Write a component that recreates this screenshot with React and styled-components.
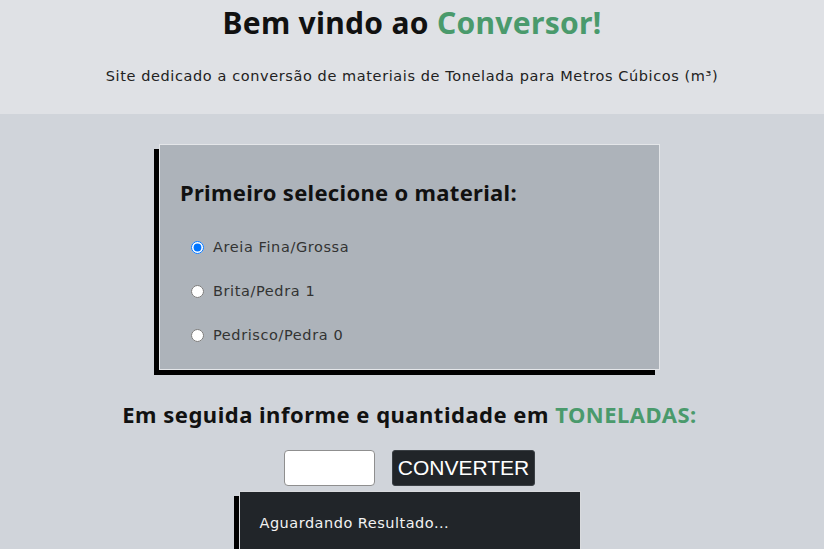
import React from "react";
import styled, { createGlobalStyle } from "styled-components";

const Global = createGlobalStyle`
  html, body { margin: 0; padding: 0; }
  body { background: #d0d4da; font-family: "Noto Sans", sans-serif; color: #111; }
`;

const Header = styled.header`
  background: #dfe1e5;
  height: 114px;
  box-sizing: border-box;
  padding-top: 4px;
  text-align: center;
`;

const Title = styled.h1`
  margin: 0;
  font-family: "Noto Sans", sans-serif;
  font-size: 30px;
  font-weight: 700;
  letter-spacing: 0.3px;
  line-height: 38px;
  color: #111;
`;

const Green = styled.span`
  color: #4a9a6c;
`;

const Subtitle = styled.p`
  margin: 24px 0 0;
  font-family: "DejaVu Sans", sans-serif;
  font-size: 14.5px;
  letter-spacing: 0.6px;
  line-height: 20px;
  color: #222;
`;

const Main = styled.main`
  display: flex;
  flex-direction: column;
  align-items: center;
  padding: 30px 5px 0 0;
`;

const Card = styled.section`
  width: 501px;
  height: 226px;
  box-sizing: border-box;
  background: #adb3ba;
  border: 1px solid #e4e6e9;
  box-shadow: -5px 5px 0 #000;
  padding: 32px 20px 0 20px;
`;

const CardTitle = styled.h2`
  margin: 0 0 30px;
  font-size: 22px;
  font-weight: 700;
  letter-spacing: 0.3px;
  line-height: 30px;
  color: #111;
`;

const Options = styled.div`
  display: flex;
  flex-direction: column;
  gap: 24px;
  padding-left: 11px;
`;

const Option = styled.label`
  display: flex;
  align-items: center;
  gap: 6px;
  font-family: "DejaVu Sans", sans-serif;
  font-size: 14.5px;
  letter-spacing: 0.6px;
  line-height: 20px;
  color: #333;
  input { margin: 0 3px 0 0; width: 13px; height: 13px; }
`;

const Prompt = styled.h2`
  margin: 29px 0 0;
  font-size: 22px;
  font-weight: 700;
  letter-spacing: 0.5px;
  line-height: 30px;
  color: #111;
  text-align: center;
`;

const Form = styled.div`
  display: flex;
  gap: 17px;
  margin-top: 21px;
`;

const Input = styled.input`
  width: 91px;
  height: 36px;
  box-sizing: border-box;
  border: 1px solid #8f8f8f;
  border-radius: 4px;
  background: #fff;
`;

const Button = styled.button`
  height: 36px;
  padding: 0 5px;
  background: #212529;
  color: #fff;
  border: 1px solid #3a3f44;
  border-radius: 3px;
  font-family: "Liberation Sans", Arial, sans-serif;
  font-size: 21px;
`;

const Result = styled.div`
  margin-top: 5px;
  width: 342px;
  height: 80px;
  box-sizing: border-box;
  background: #212529;
  border: 1px solid #d8dadd;
  box-shadow: -5px 5px 0 #000;
  padding: 21px 20px;
  color: #f2f2f2;
  font-family: "DejaVu Sans", sans-serif;
  font-size: 14.5px;
  letter-spacing: 0.5px;
  line-height: 20px;
`;

const materials = ["Areia Fina/Grossa", "Brita/Pedra 1", "Pedrisco/Pedra 0"];

export default function App() {
  return (
    <>
      <Global />
      <Header>
        <Title>
          Bem vindo ao <Green>Conversor!</Green>
        </Title>
        <Subtitle>
          Site dedicado a conversão de materiais de Tonelada para Metros Cúbicos (m³)
        </Subtitle>
      </Header>
      <Main>
        <Card>
          <CardTitle>Primeiro selecione o material:</CardTitle>
          <Options>
            {materials.map((m, i) => (
              <Option key={m}>
                <input type="radio" name="material" defaultChecked={i === 0} />
                {m}
              </Option>
            ))}
          </Options>
        </Card>
        <Prompt>
          Em seguida informe e quantidade em <Green>TONELADAS:</Green>
        </Prompt>
        <Form>
          <Input type="text" />
          <Button>CONVERTER</Button>
        </Form>
        <Result>Aguardando Resultado...</Result>
      </Main>
    </>
  );
}
